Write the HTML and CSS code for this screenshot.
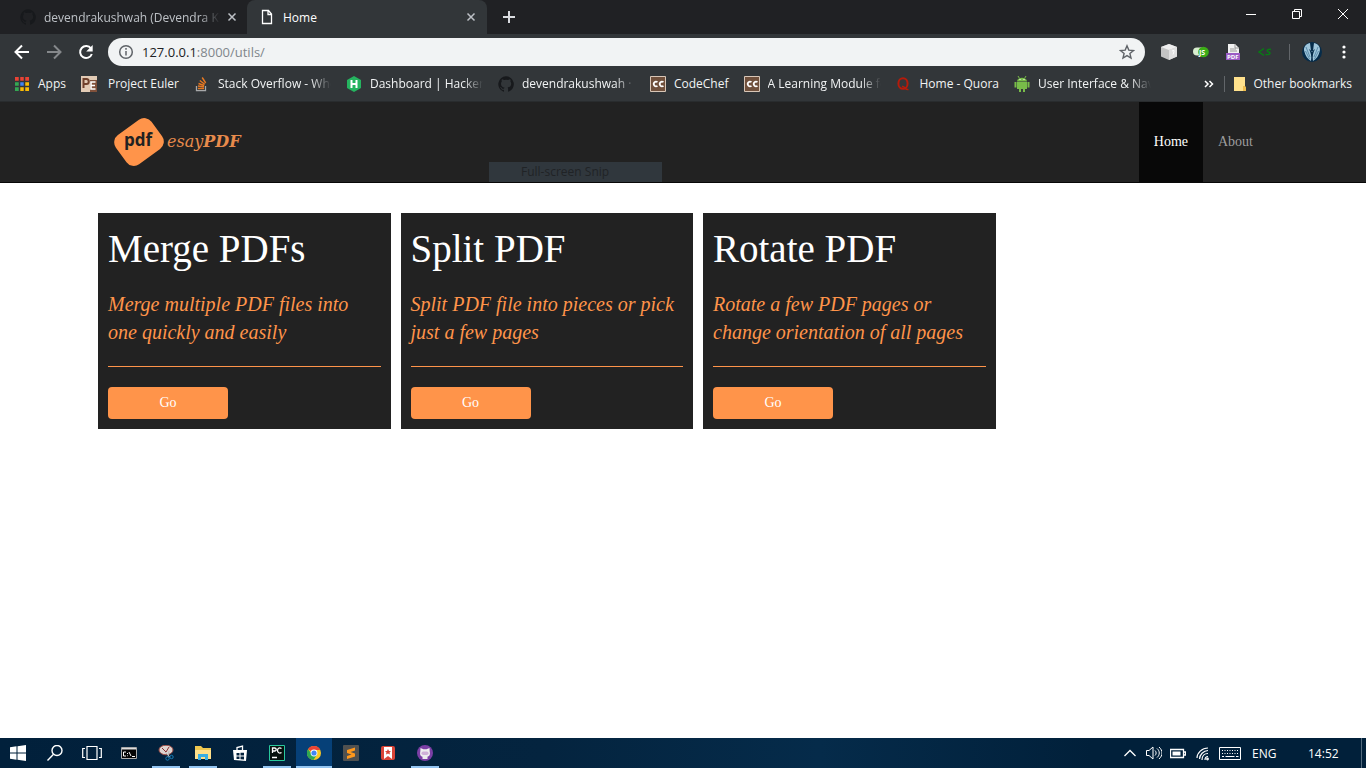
FILE: index.html
```html
<!DOCTYPE html>
<html lang="en">
<head>
<meta charset="utf-8">
<title>Home</title>
<link rel="stylesheet" href="styles.css">
</head>
<body>
<svg class="defs" width="0" height="0" aria-hidden="true">
  <symbol id="github" viewBox="0 0 16 16"><path d="M8 .2a8 8 0 0 0-2.500 15.500c.4.100.5-.2.500-.4v-1.500c-2.200.5-2.700-1-2.700-1-.4-.9-.9-1.200-.9-1.200-.7-.5.1-.5.1-.5.8.1 1.200.8 1.200.8.700 1.200 1.900.9 2.400.7 0-.5.3-.9.500-1.100-1.800-.2-3.600-.9-3.600-4 0-.9.300-1.600.8-2.100-.1-.2-.4-1 .1-2.100 0 0 .7-.2 2.200.8a7.500 7.500 0 0 1 4 0c1.500-1 2.200-.8 2.200-.8.500 1.100.2 1.900.1 2.100.5.600.8 1.300.8 2.100 0 3.100-1.900 3.800-3.600 4 .3.200.5.700.5 1.500v2.300c0 .2.100.5.500.4A8 8 0 0 0 8 .2z"/></symbol>
  <symbol id="cross" viewBox="0 0 16 16"><path d="M4.500 4.500l7 7M11.500 4.500l-7 7" fill="none" stroke="currentColor" stroke-width="1.500"/></symbol>
</svg>

<header class="browser">
  <div class="tabs">
    <div class="tab">
      <svg class="icon ink" aria-hidden="true"><use href="#github"/></svg>
      <span class="tab-title fade">devendrakushwah (Devendra Kus</span>
      <button class="icon-btn muted" aria-label="Close tab"><svg class="icon"><use href="#cross"/></svg></button>
    </div>
    <div class="tab active">
      <svg class="icon" viewBox="0 0 16 16" fill="none" stroke="#fff" stroke-width="1.300" aria-hidden="true"><path d="M3.500 1.500h6l3 3.500v9.500h-9zM9 1.500V5.500h3.500"/></svg>
      <span class="tab-title">Home</span>
      <button class="icon-btn muted" aria-label="Close tab"><svg class="icon"><use href="#cross"/></svg></button>
    </div>
    <button class="icon-btn new-tab" aria-label="New tab"><svg class="icon" viewBox="0 0 16 16" stroke="#dadce0" stroke-width="2"><path d="M8 2v12M2 8h12"/></svg></button>
    <div class="window-controls">
      <button class="icon-btn" aria-label="Minimize"><svg class="icon" viewBox="0 0 16 16" stroke="#fff" fill="none"><path d="M3 8.500h10"/></svg></button>
      <button class="icon-btn" aria-label="Restore"><svg class="icon" viewBox="0 0 16 16" stroke="#fff" fill="none"><path d="M3.500 5.500h7v7h-7zM5.500 5.500v-2h7v7h-2"/></svg></button>
      <button class="icon-btn" aria-label="Close"><svg class="icon" viewBox="0 0 16 16" stroke="#fff" fill="none"><path d="M3 3l10 10M13 3L3 13"/></svg></button>
    </div>
  </div>

  <div class="toolbar">
    <button class="icon-btn" aria-label="Back"><svg class="icon" viewBox="0 0 16 16" stroke="#fff" stroke-width="2" fill="none"><path d="M15 8H2M8 1.500L1.500 8 8 14.500"/></svg></button>
    <button class="icon-btn" aria-label="Forward"><svg class="icon" viewBox="0 0 16 16" stroke="#85888b" stroke-width="2" fill="none"><path d="M1 8h13M8 1.500L14.500 8 8 14.500"/></svg></button>
    <button class="icon-btn" aria-label="Reload"><svg class="icon" viewBox="0 0 16 16"><path d="M13 4.500A6 6 0 1 0 13.800 10" fill="none" stroke="#fff" stroke-width="2"/><path d="M14.700 1v6.500H8.200z" fill="#fff"/></svg></button>
    <div class="omnibox">
      <svg class="icon" viewBox="0 0 16 16" fill="none" stroke="#5f6368" stroke-width="1.500" aria-hidden="true"><circle cx="8" cy="8" r="6.300"/><path d="M8 7v4.500M8 4v1.700"/></svg>
      <a class="address" href="#"><span class="host">127.0.0.1</span>:8000/utils/</a>
      <button class="icon-btn" aria-label="Bookmark this page"><svg class="icon" viewBox="0 0 16 16" fill="none" stroke="#5f6368" stroke-width="1.400"><path d="M8 1.800l1.800 4.300 4.700.4-3.600 3 1.100 4.600L8 11.600l-4 2.500 1.100-4.600-3.600-3 4.700-.4z"/></svg></button>
    </div>
    <button class="icon-btn" aria-label="Cube extension"><svg class="icon" viewBox="0 0 16 16"><path d="M8 0l8 3v9.500L8 16l-8-3.500V3z" fill="#c4c4c4"/><path d="M8 0l8 3-8 3-8-3z" fill="#eee"/><path d="M8 6l8-3v9.500L8 16z" fill="#e0e0e0"/><path d="M11 7l2-.5v1l-1 3" stroke="#fff" fill="none"/></svg></button>
    <button class="icon-btn" aria-label="JavaScript switch"><svg class="icon" viewBox="0 0 16 16"><rect y="3.500" width="13" height="8" rx="4" fill="#d9eed0"/><circle cx="10.500" cy="8" r="5.300" fill="#3cac16"/><text x="6" y="11" class="js-label">JS</text></svg></button>
    <button class="icon-btn" aria-label="PDF extension"><svg class="icon" viewBox="0 0 16 16"><path d="M3 0h7l4 4v8H3z" fill="#f1f1f1"/><path d="M10 0v4h4M5 5h6M5 7h7" stroke="#999" fill="none"/><path d="M1 9h14v7H1z" fill="#9b5bc5"/><text x="2" y="15" class="pdf-label">PDF</text></svg></button>
    <button class="icon-btn" aria-label="Code extension"><svg class="icon" viewBox="0 0 16 16" fill="none" stroke="#087b14" stroke-width="1.500"><path d="M7 4.500L2 8l5 3.500M14 5.500c-3-1-5 1-3 2.200 3 .8 3 3.500-2.500 2.800"/></svg></button>
    <span class="rule"></span>
    <button class="icon-btn profile" aria-label="Profile"><svg class="avatar" viewBox="0 0 20 20"><circle cx="10" cy="10" r="10" fill="#062c4a"/><path d="M8 1C3 2 1 6 2.500 10c1 4 3 7 6.500 9 1-5-.5-9-2-12 2 1 3 3 3 3s1-2 3-3c-1.500 3-3 7-2 12 3.500-2 5.500-5 6.500-9C19 6 17 2 12 1l-1 8h-2z" fill="#9fc6db"/><path d="M4 5l4 10M3.500 9l4 8M16 5l-4 10M16.500 9l-4 8" stroke="#5b8cab"/></svg></button>
    <button class="icon-btn" aria-label="Menu"><svg class="icon" viewBox="0 0 16 16" fill="#fff"><circle cx="8" cy="3" r="1.600"/><circle cx="8" cy="8" r="1.600"/><circle cx="8" cy="13" r="1.600"/></svg></button>
  </div>

  <nav class="bookmarks" aria-label="Bookmarks">
    <a href="#"><svg class="icon" viewBox="0 0 16 16"><path d="M1 1h4v4H1zM6 1h4v4H6zM11 1h4v4h-4z" fill="#ea4335"/><path d="M1 6h4v4H1z" fill="#34a853"/><path d="M6 6h4v4H6z" fill="#4285f4"/><path d="M11 6h4v4h-4zM6 11h4v4H6zM11 11h4v4h-4z" fill="#fbbc05"/><path d="M1 11h4v4H1z" fill="#34a853"/><path d="M5.500 1v14M10.500 1v14M1 5.500h14M1 10.500h14" stroke="#323639" stroke-width="1.500"/></svg><span>Apps</span></a>
    <a href="#" class="wide-gap"><svg class="icon" viewBox="0 0 16 16"><path d="M0 0h16v16H0z" fill="#e2cbb5"/><path d="M9 4h7v12H9z" fill="#80513b"/><path d="M2.500 12V3H5.500c3 0 3 5 0 5H3" stroke="#70412c" stroke-width="2" fill="none"/><path d="M14.500 6H10v7h4.500M10 9.500h4" stroke="#fff" stroke-width="1.600" fill="none"/></svg><span>Project Euler</span></a>
    <a href="#"><svg class="icon" viewBox="0 0 16 16" fill="none"><path d="M2.500 10v4.700h9V10" stroke="#a7a9aa" stroke-width="1.300"/><path d="M4 12.500h6M4 10l6 .9M4.500 7.500l5.700 2M5.800 4.500l4.900 3.800M8.200 1.500l3.500 5.500" stroke="#e87922" stroke-width="1.400"/></svg><span class="clip fade">Stack Overflow - Whe</span></a>
    <a href="#"><svg class="icon" viewBox="0 0 16 16"><path d="M8 0l7 4v8l-7 4-7-4V4z" fill="#25b45f"/><path d="M5.500 4v8M10.500 4v8M5.500 8h5" stroke="#fff" stroke-width="2"/></svg><span class="clip fade">Dashboard | HackerR</span></a>
    <a href="#"><svg class="icon ink"><use href="#github"/></svg><span class="clip fade">devendrakushwah · G</span></a>
    <a href="#"><svg class="icon" viewBox="0 0 16 16"><path d="M.5.500h15v15H.5z" fill="#70503c" stroke="#d8c6b7"/><path d="M7.500 6.200a2.300 2.300 0 1 0 0 3.600M13.500 6.200a2.300 2.300 0 1 0 0 3.600" stroke="#fff" stroke-width="1.700" fill="none"/></svg><span>CodeChef</span></a>
    <a href="#"><svg class="icon" viewBox="0 0 16 16"><path d="M.5.500h15v15H.5z" fill="#70503c" stroke="#d8c6b7"/><path d="M7.500 6.200a2.300 2.300 0 1 0 0 3.600M13.500 6.200a2.300 2.300 0 1 0 0 3.600" stroke="#fff" stroke-width="1.700" fill="none"/></svg><span class="clip fade">A Learning Module fo</span></a>
    <a href="#"><svg class="icon" viewBox="0 0 16 16" fill="none" stroke="#b51b0b"><ellipse cx="7" cy="7.500" rx="4.600" ry="5.300" stroke-width="2"/><path d="M6 10.500c3-1 3 4 6.500 3" stroke-width="1.500"/></svg><span>Home - Quora</span></a>
    <a href="#"><svg class="icon" viewBox="0 0 16 16" fill="#78bd49"><path d="M3 5.500c.3-5 9.700-5 10 0zM3 6h10v7H3zM.5 6h2v5.500h-2zM13.500 6h2v5.500h-2zM5 12h2v4H5zM9 12h2v4H9z"/><path d="M4 0l1.500 2.500M12 0l-1.500 2.500" stroke="#78bd49"/><path d="M5.500 3.500h1M9.500 3.500h1" stroke="#fff"/></svg><span class="clip fade">User Interface &amp; Navi</span></a>
    <button class="more" aria-label="More bookmarks"><svg class="icon" viewBox="0 0 16 16" fill="none" stroke="#fff" stroke-width="1.500"><path d="M4 5l3 3-3 3M8.500 5l3 3-3 3"/></svg></button>
    <span class="rule"></span>
    <a href="#" class="narrow-gap"><svg class="icon" viewBox="0 0 16 16"><path d="M2 1h11v9l1 2v3H2z" fill="#ffe18c"/><path d="M11 10h2l1 2v3h-3z" fill="#efbd4d"/></svg><span>Other bookmarks</span></a>
  </nav>
</header>

<div class="page">
  <header class="site-header">
    <div class="container site-bar">
      <a class="brand" href="#" aria-label="esayPDF">
        <svg class="brand-mark" viewBox="0 0 52 50"><rect x="4" y="7" width="44" height="36" rx="9" transform="rotate(-36 26 25)" fill="#ff944a"/><text x="11" y="29" class="brand-pdf">pdf</text></svg>
        <span class="brand-name">esay<b>PDF</b></span>
      </a>
      <nav class="site-nav">
        <a class="current" href="#">Home</a>
        <a href="#">About</a>
      </nav>
    </div>
    <div class="snip">Full-screen Snip</div>
  </header>
  <main class="container cards">
    <section class="card">
      <h1>Merge PDFs</h1>
      <p>Merge multiple PDF files into one quickly and easily</p>
      <hr>
      <button>Go</button>
    </section>
    <section class="card">
      <h1>Split PDF</h1>
      <p>Split PDF file into pieces or pick just a few pages</p>
      <hr>
      <button>Go</button>
    </section>
    <section class="card">
      <h1>Rotate PDF</h1>
      <p>Rotate a few PDF pages or change orientation of all pages</p>
      <hr>
      <button>Go</button>
    </section>
  </main>
</div>

<footer class="taskbar">
  <div class="apps">
    <button aria-label="Start"><svg class="icon" viewBox="0 0 16 16" fill="#fff"><path d="M0 2.300l6.500-1V7.500H0zM7.500 1.200L16 0v7.500H7.500zM0 8.500h6.500v6.200l-6.500-1zM7.500 8.500H16V16l-8.500-1.200z"/></svg></button>
    <button aria-label="Search"><svg class="icon" viewBox="0 0 16 16" fill="none" stroke="#fff" stroke-width="1.400"><circle cx="10" cy="5.500" r="5"/><path d="M6.500 9.200L.5 15.500"/></svg></button>
    <button aria-label="Task view"><svg class="icon-wide" viewBox="0 0 20 16" fill="none" stroke="#fff" stroke-width="1.200"><path d="M5 1.500h10v13H5zM3 3.500H.7v9H3M17 3.500h2.300v9H17"/></svg></button>
    <button aria-label="Command Prompt"><svg class="icon" viewBox="0 0 16 16"><path d="M.5 2.500h15v11H.5z" fill="#050505" stroke="#aaa"/><path d="M1 3h14v1.500H1z" fill="#ddd"/><path d="M5 7H2.500v4H5M6.500 8v1M6.500 10.500v.7M8 7l2 4M11 11.500h3" stroke="#fff" fill="none"/></svg></button>
    <button class="open" aria-label="Snipping Tool"><svg class="icon" viewBox="0 0 16 16" fill="none"><ellipse cx="8" cy="5" rx="7" ry="4.800" fill="#ddd3cf" stroke="#a04c43"/><path d="M4 3l4 4M11 2L8 7" stroke="#8b3131"/><path d="M7 7l5 5M11 6l-1 6" stroke="#bbb"/><circle cx="9.500" cy="13.500" r="1.700" stroke="#197db6"/><circle cx="13.500" cy="12" r="1.700" stroke="#197db6"/></svg></button>
    <button class="open" aria-label="File Explorer"><svg class="icon" viewBox="0 0 16 16"><path d="M0 1h6l2 2h8v11H0z" fill="#efc850"/><path d="M0 5h16v9H0z" fill="#ffe08a"/><path d="M3 15V9h10v6h-3v-3H6v3z" fill="#38aee4"/></svg></button>
    <button aria-label="Store"><svg class="icon" viewBox="0 0 16 16"><path d="M1 5h14l-1 11-12-1z" fill="#fff"/><path d="M5 6V2.500L10.500 1v5" fill="none" stroke="#fff" stroke-width="1.300"/><path d="M4.500 8h3v2.500h-3zM8.500 7.700h3.500v2.800H8.500zM4.500 11.500h3V14h-3zM8.500 11.500h3.500v3l-3.500-.3z" fill="#04223d"/></svg></button>
    <button class="open" aria-label="PyCharm"><svg class="icon" viewBox="0 0 16 16"><path d="M.5.500h15v15H.5z" fill="#07110e" stroke="#29c99d"/><path d="M3.500 8V3H5.700c2 0 2 3 0 3H4M12.500 3.500C10 2 8.500 3.700 8.500 5.500S10.500 9 12.500 7.500M3 12.500h5" stroke="#fff" stroke-width="1.300" fill="none"/></svg></button>
    <button class="open focused" aria-label="Chrome"><svg class="icon" viewBox="0 0 16 16"><circle cx="8" cy="8" r="7" fill="#fbc723"/><path d="M8 8L2 4.300A7 7 0 0 1 14.200 5H8z" fill="#ea4335"/><path d="M2 4.300A7 7 0 0 0 7.500 15L11 9.500 8 8H5z" fill="#2da853"/><circle cx="8" cy="8" r="3.400" fill="#fff"/><circle cx="8" cy="8" r="2.600" fill="#4285f4"/></svg></button>
    <button aria-label="Sublime Text"><svg class="icon" viewBox="0 0 16 16"><rect width="16" height="16" rx="1" fill="#505150"/><path d="M12 2.500v3L7.500 7 12 8.500v3L4 14v-3l4.500-1.500L4 8V5z" fill="#ff981c"/></svg></button>
    <button aria-label="Wunderlist"><svg class="icon" viewBox="0 0 16 16"><rect x="1" y="1" width="14" height="14" rx="2" fill="#da4437"/><path d="M4 2h8v12l-4-3-4 3z" fill="#fff"/><path d="M8 4l1 2h2L9.500 7.500l.5 2L8 8.500l-2 1 .5-2L5 6h2z" fill="#da4437"/></svg></button>
    <button class="open" aria-label="GitHub Desktop"><svg class="icon" viewBox="0 0 16 16"><circle cx="8" cy="8" r="8" fill="#7b3fa5"/><path d="M3.500 3l3 1.200h3l3-1.200.2 3.500c1 4-1 5-2.200 5.200V14h-5v-2.300C4 11.500 2.500 10 3.300 6.500z" fill="#eee"/><rect x="4.500" y="6.500" width="7" height="3.500" rx="1.700" fill="#d0b1d8"/></svg></button>
  </div>
  <div class="tray">
    <button class="icon-btn" aria-label="Show hidden icons"><svg class="icon" viewBox="0 0 16 16" stroke="#fff" fill="none" stroke-width="1.300"><path d="M2.500 11L8 5.500l5.500 5.500"/></svg></button>
    <button class="icon-btn" aria-label="Volume"><svg class="icon" viewBox="0 0 16 16" stroke="#fff" fill="none"><path d="M.5 5.500H3l4-3.500v12l-4-3.500H.5zM9 5.500c1.500 1.500 1.500 3.500 0 5M11 3.500c3 2.500 3 6.500 0 9M13 2c4 3.500 4 8.500 0 12"/></svg></button>
    <button class="icon-btn" aria-label="Battery"><svg class="icon" viewBox="0 0 16 16"><path d="M.5 4.500h13v8H.5zM14 7h1.500v3H14" stroke="#fff" fill="none" stroke-width="1.300"/><path d="M2.500 6.500h8v4h-8z" fill="#fff"/></svg></button>
    <button class="icon-btn" aria-label="Network"><svg class="icon" viewBox="0 0 16 16" stroke="#fff" fill="none" stroke-width="1.200"><path d="M3 13C3 8 8 3 14 3M5.500 14c0-4 4-8.500 8.500-8.500M8 15c0-4 2.500-6.500 6-6.500M11 15c0-2 1-3.500 3-3.500"/><circle cx="13.500" cy="14" r=".8"/></svg></button>
    <button class="keyboard" aria-label="Touch keyboard"><svg width="24" height="16" viewBox="0 0 24 16" stroke="#fff" fill="none"><path d="M1.500 2.500h21v12h-21z"/><path d="M4 5.500h17M4 8.500h17" stroke-dasharray="1 1.500"/><path d="M4 11.500h2M7.500 11.500h9M18 11.500h2.500"/></svg></button>
    <span class="language">ENG</span>
    <time>14:52</time>
    <span class="desktop-edge"></span>
  </div>
</footer>
</body>
</html>
```
FILE: styles.css
```css
* { box-sizing: border-box; }

body {
  margin: 0;
  min-height: 100vh;
  display: flex;
  flex-direction: column;
  background: #fff;
  font-family: "Liberation Serif", serif;
  font-size: 14px;
}

button {
  border: 0;
  padding: 0;
  background: none;
  font: inherit;
  color: inherit;
}

a { color: inherit; text-decoration: none; }
svg { display: block; flex: none; }
.defs { position: absolute; }
.icon { width: 16px; height: 16px; }
.icon-wide { width: 20px; height: 16px; }
.icon-btn { flex: none; width: 16px; height: 16px; }
.ink { fill: #17191c; }
.muted { color: #bdc1c6; }
.fade {
  overflow: hidden;
  -webkit-mask-image: linear-gradient(to right, #000 calc(100% - 20px), transparent);
  mask-image: linear-gradient(to right, #000 calc(100% - 20px), transparent);
}
.rule { flex: none; width: 1px; height: 16px; background: #62666a; }

/* Browser window */
.browser {
  background: #323639;
  color: #f1f3f4;
  font-family: "Open Sans", sans-serif;
  font-size: 12px;
  white-space: nowrap;
}
.tabs { display: flex; height: 34px; background: #202124; }
.tab {
  display: flex;
  align-items: center;
  gap: 8px;
  flex: 0 1 247px;
  min-width: 0;
  padding: 0 7px 0 20px;
  color: #bdc1c6;
}
.tab:first-child { gap: 8px 4px; }
.tab:first-child .icon.ink { margin-right: 4px; }
.tab.active {
  flex-basis: 240px;
  padding: 0 8px 0 12px;
  border-radius: 8px 8px 0 0;
  background: #323639;
  color: #fff;
}
.tab-title { flex: 1; min-width: 0; }
.new-tab { align-self: center; margin-left: 14px; }
.window-controls { display: flex; gap: 30px; margin-left: auto; padding: 6px 15px; }

.toolbar { display: flex; align-items: center; gap: 16px; padding: 4px 14px; }
.toolbar .rule { margin-right: -2px; }
.omnibox {
  display: flex;
  flex: 1;
  align-items: center;
  gap: 8px;
  height: 28px;
  margin-left: -2px;
  padding: 0 10px;
  border-radius: 14px;
  background: #f1f3f4;
}
.address { flex: 1; color: #80868b; font-size: 13px; }
.host { color: #202124; }
.profile { display: flex; align-items: center; justify-content: center; }
.avatar { width: 20px; height: 20px; }
.js-label { font: bold 7px "Open Sans", sans-serif; fill: #fff; }
.pdf-label { font: bold 6px "Open Sans", sans-serif; fill: #fff; }

.bookmarks {
  display: flex;
  align-items: center;
  gap: 15px;
  height: 31px;
  padding: 0 14px 4px;
}
.bookmarks a { display: flex; align-items: center; gap: 8px; }
.bookmarks .wide-gap { gap: 11px; }
.bookmarks .narrow-gap { gap: 5px; }
.clip { width: 113px; }
.more { margin-left: auto; }
.bookmarks .rule { margin: 0 -8px; }

/* Site */
.page { flex: 1; }
.container { width: 100%; max-width: 1170px; margin: 0 auto; }
.site-header {
  position: relative;
  border-top: 1px solid #292c2e;
  border-bottom: 1px solid #080808;
  background: #222;
}
.site-bar { display: flex; justify-content: space-between; padding: 0 0 0 15px; }
.brand { display: flex; align-items: center; gap: 2px; }
.brand-mark { width: 52px; height: 50px; }
.brand-pdf { font: bold 17px "Open Sans", sans-serif; fill: #222; }
.brand-name {
  color: #e88b4c;
  font: italic 16px/20px "DejaVu Serif", serif;
}
.site-nav { display: flex; }
.site-nav a { padding: 30px 15px; line-height: 20px; color: #9d9d9d; }
.site-nav .current { background: #080808; color: #fff; }
.snip {
  position: absolute;
  bottom: 0;
  left: 489px;
  width: 173px;
  padding-left: 32px;
  background: #30373d;
  color: #202326;
  font: 12px/20px "Open Sans", sans-serif;
}

.cards {
  display: flex;
  gap: 10px;
  padding: 30px 0;
}
.card { flex: 0 0 25%; padding: 10px; background: #222; }
.card h1 {
  margin: 4px 0 20px;
  color: #fff;
  font-size: 39px;
  font-weight: 400;
  line-height: 43px;
}
.card p {
  margin: 0 0 20px;
  color: #ff944a;
  font-size: 20px;
  font-style: italic;
  line-height: 28px;
}
.card hr {
  height: 1px;
  margin: 0 0 20px;
  border: 0;
  background: #ff944a;
}
.card button {
  display: block;
  width: 120px;
  height: 32px;
  border-radius: 4px;
  background: #ff944a;
  color: #fff;
}

/* Desktop taskbar */
.taskbar {
  display: flex;
  justify-content: space-between;
  height: 30px;
  background: linear-gradient(90deg, #01203b, #04243f 40%, #052b4a 60%, #01203a 80%);
  color: #fff;
  font: 12px "Open Sans", sans-serif;
}
.apps { display: flex; gap: 1px; }
.apps button {
  display: grid;
  place-items: center;
  width: 36px;
  height: 30px;
}
.apps .open {
  background: linear-gradient(#93c5f2, #93c5f2) bottom / 28px 2px no-repeat;
}
.apps .focused {
  background: linear-gradient(#93c5f2, #93c5f2) bottom / 100% 2px no-repeat #064078;
}
.tray { display: flex; align-items: center; gap: 8px; }
.keyboard { width: 24px; }
.language { width: 24px; margin-left: 2px; }
.tray time { width: 30px; margin: 0 15px 0 24px; }
.desktop-edge { align-self: stretch; width: 5px; border-left: 1px solid #536b7e; }
```
